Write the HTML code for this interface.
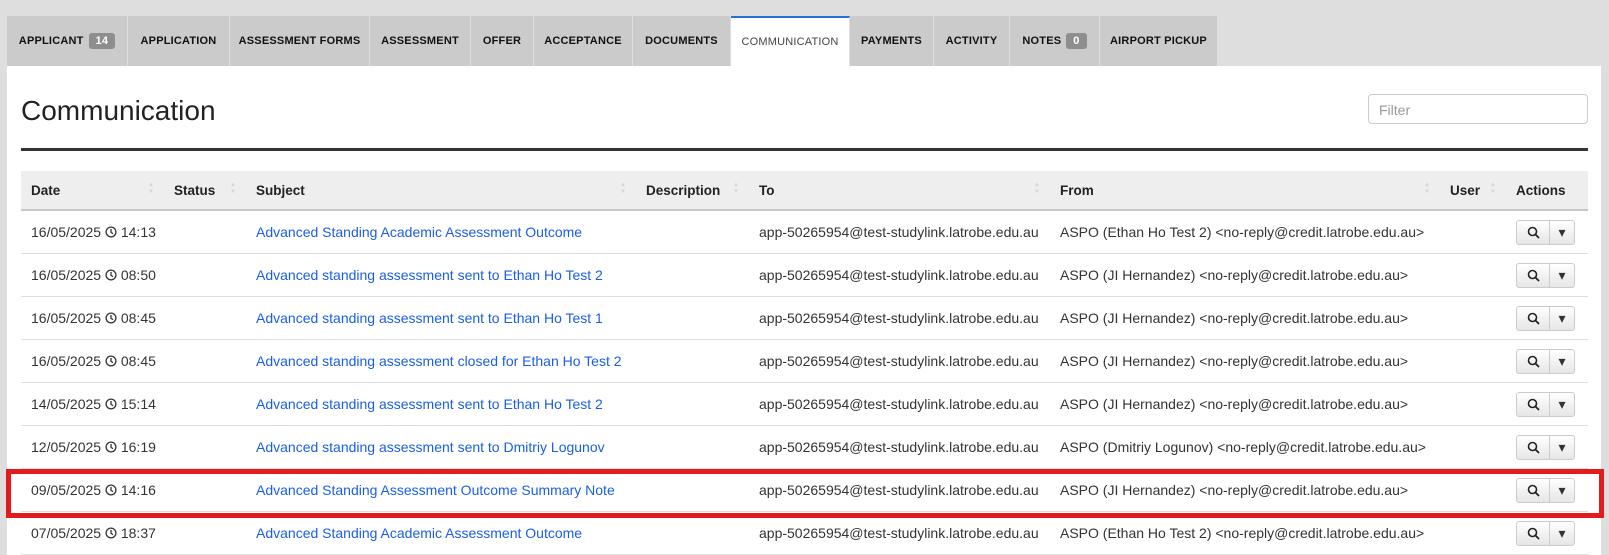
<!DOCTYPE html>
<html><head><meta charset="utf-8"><style>
body{margin:0;width:1609px;height:555px;overflow:hidden;background:#dedede;font-family:"Liberation Sans",Arial,sans-serif;position:relative}
.tabs{position:absolute;left:7px;top:16px;height:50px;display:flex}
.tab{height:50px;box-sizing:border-box;background:#cbcbcb;border-right:1px solid #dedede;font-size:11px;font-weight:bold;color:#111;display:flex;align-items:center;justify-content:center;letter-spacing:.2px}
.tab.act{background:#fff;border-top:2px solid #2a6fdb;color:#444;font-weight:normal}
.badge{background:#8e8e8e;color:#fff;border-radius:3px;padding:2px 7px;margin-left:5px;font-size:11px}
.main{position:absolute;left:7px;top:66px;width:1594px;height:489px;background:#fff}
h1{position:absolute;left:21px;top:95px;margin:0;font-weight:normal;font-size:28px;color:#222}
.filter{position:absolute;left:1368px;top:94px;width:220px;height:30px;box-sizing:border-box;border:1px solid #ccc;border-radius:4px;font-size:14px;color:#999;padding:7px 10px}
.rule{position:absolute;left:21px;top:148px;width:1567px;height:3px;background:#333}
table{position:absolute;left:21px;top:171px;width:1567px;border-collapse:collapse;table-layout:fixed;font-size:14px;color:#333}
th{background:#eee;height:38px;text-align:left;font-size:13.5px;color:#222;padding:0 10px;border-bottom:2px solid #c8c8c8;position:relative}
th.s:after{content:"▲\A▼";white-space:pre;position:absolute;right:10px;top:11px;font-size:6px;line-height:7px;color:#d4d4d4}
td{height:42px;padding:0 10px;border-bottom:1px solid #ddd;white-space:nowrap;overflow:visible}
td a{color:#1a5ee8;text-decoration:none}
.btn{display:inline-flex;width:59px;height:25px;border:1px solid #ccc;border-radius:3px;box-sizing:border-box;background:linear-gradient(#fff,#e6e6e6)}
.btn span{flex:1;display:flex;align-items:center;justify-content:center}
.btn span+span{border-left:1px solid #ccc;flex:0 0 24px}
.red{position:absolute;left:6px;top:469px;width:1598px;height:49px;box-sizing:border-box;border:5px solid #e21c1c}
.ck{display:inline-block;width:12px;height:12px;vertical-align:-1px}
</style></head><body>
<svg width="0" height="0" style="position:absolute"><defs><symbol id="clk" viewBox="0 0 12 12"><circle cx="6" cy="6" r="4.9" fill="none" stroke="#333" stroke-width="1.3"/><path d="M6 3v3.2l2 1.6" fill="none" stroke="#333" stroke-width="1.3"/></symbol></defs></svg>
<div class="tabs">
<div class="tab" style="width:121px">APPLICANT <span class="badge">14</span></div>
<div class="tab" style="width:102px">APPLICATION</div>
<div class="tab" style="width:140px">ASSESSMENT FORMS</div>
<div class="tab" style="width:101px">ASSESSMENT</div>
<div class="tab" style="width:63px">OFFER</div>
<div class="tab" style="width:99px">ACCEPTANCE</div>
<div class="tab" style="width:98px">DOCUMENTS</div>
<div class="tab act" style="width:119px">COMMUNICATION</div>
<div class="tab" style="width:84px">PAYMENTS</div>
<div class="tab" style="width:76px">ACTIVITY</div>
<div class="tab" style="width:90px">NOTES <span class="badge">0</span></div>
<div class="tab" style="width:118px">AIRPORT PICKUP</div>
</div>
<div class="main"></div>
<h1>Communication</h1>
<div class="filter">Filter</div>
<div class="rule"></div>
<table>
<colgroup><col style="width:143px"><col style="width:82px"><col style="width:390px"><col style="width:113px"><col style="width:301px"><col style="width:390px"><col style="width:66px"><col style="width:82px"></colgroup>
<tr><th class="s">Date</th><th class="s">Status</th><th class="s">Subject</th><th class="s">Description</th><th class="s">To</th><th class="s">From</th><th class="s">User</th><th>Actions</th></tr>
<tr><td>16/05/2025 <svg class="ck"><use href="#clk"/></svg> 14:13</td><td></td><td><a>Advanced Standing Academic Assessment Outcome</a></td><td></td><td>app-50265954@test-studylink.latrobe.edu.au</td><td>ASPO (Ethan Ho Test 2) &lt;no-reply@credit.latrobe.edu.au&gt;</td><td></td><td><div class="btn"><span><svg width="13" height="13" viewBox="0 0 13 13"><circle cx="5.5" cy="5.5" r="4" fill="none" stroke="#222" stroke-width="1.6"/><path d="M8.5 8.5L12 12" stroke="#222" stroke-width="1.8"/></svg></span><span>&#9662;</span></div></td></tr>
<tr><td>16/05/2025 <svg class="ck"><use href="#clk"/></svg> 08:50</td><td></td><td><a>Advanced standing assessment sent to Ethan Ho Test 2</a></td><td></td><td>app-50265954@test-studylink.latrobe.edu.au</td><td>ASPO (JI Hernandez) &lt;no-reply@credit.latrobe.edu.au&gt;</td><td></td><td><div class="btn"><span><svg width="13" height="13" viewBox="0 0 13 13"><circle cx="5.5" cy="5.5" r="4" fill="none" stroke="#222" stroke-width="1.6"/><path d="M8.5 8.5L12 12" stroke="#222" stroke-width="1.8"/></svg></span><span>&#9662;</span></div></td></tr>
<tr><td>16/05/2025 <svg class="ck"><use href="#clk"/></svg> 08:45</td><td></td><td><a>Advanced standing assessment sent to Ethan Ho Test 1</a></td><td></td><td>app-50265954@test-studylink.latrobe.edu.au</td><td>ASPO (JI Hernandez) &lt;no-reply@credit.latrobe.edu.au&gt;</td><td></td><td><div class="btn"><span><svg width="13" height="13" viewBox="0 0 13 13"><circle cx="5.5" cy="5.5" r="4" fill="none" stroke="#222" stroke-width="1.6"/><path d="M8.5 8.5L12 12" stroke="#222" stroke-width="1.8"/></svg></span><span>&#9662;</span></div></td></tr>
<tr><td>16/05/2025 <svg class="ck"><use href="#clk"/></svg> 08:45</td><td></td><td><a>Advanced standing assessment closed for Ethan Ho Test 2</a></td><td></td><td>app-50265954@test-studylink.latrobe.edu.au</td><td>ASPO (JI Hernandez) &lt;no-reply@credit.latrobe.edu.au&gt;</td><td></td><td><div class="btn"><span><svg width="13" height="13" viewBox="0 0 13 13"><circle cx="5.5" cy="5.5" r="4" fill="none" stroke="#222" stroke-width="1.6"/><path d="M8.5 8.5L12 12" stroke="#222" stroke-width="1.8"/></svg></span><span>&#9662;</span></div></td></tr>
<tr><td>14/05/2025 <svg class="ck"><use href="#clk"/></svg> 15:14</td><td></td><td><a>Advanced standing assessment sent to Ethan Ho Test 2</a></td><td></td><td>app-50265954@test-studylink.latrobe.edu.au</td><td>ASPO (JI Hernandez) &lt;no-reply@credit.latrobe.edu.au&gt;</td><td></td><td><div class="btn"><span><svg width="13" height="13" viewBox="0 0 13 13"><circle cx="5.5" cy="5.5" r="4" fill="none" stroke="#222" stroke-width="1.6"/><path d="M8.5 8.5L12 12" stroke="#222" stroke-width="1.8"/></svg></span><span>&#9662;</span></div></td></tr>
<tr><td>12/05/2025 <svg class="ck"><use href="#clk"/></svg> 16:19</td><td></td><td><a>Advanced standing assessment sent to Dmitriy Logunov</a></td><td></td><td>app-50265954@test-studylink.latrobe.edu.au</td><td>ASPO (Dmitriy Logunov) &lt;no-reply@credit.latrobe.edu.au&gt;</td><td></td><td><div class="btn"><span><svg width="13" height="13" viewBox="0 0 13 13"><circle cx="5.5" cy="5.5" r="4" fill="none" stroke="#222" stroke-width="1.6"/><path d="M8.5 8.5L12 12" stroke="#222" stroke-width="1.8"/></svg></span><span>&#9662;</span></div></td></tr>
<tr><td>09/05/2025 <svg class="ck"><use href="#clk"/></svg> 14:16</td><td></td><td><a>Advanced Standing Assessment Outcome Summary Note</a></td><td></td><td>app-50265954@test-studylink.latrobe.edu.au</td><td>ASPO (JI Hernandez) &lt;no-reply@credit.latrobe.edu.au&gt;</td><td></td><td><div class="btn"><span><svg width="13" height="13" viewBox="0 0 13 13"><circle cx="5.5" cy="5.5" r="4" fill="none" stroke="#222" stroke-width="1.6"/><path d="M8.5 8.5L12 12" stroke="#222" stroke-width="1.8"/></svg></span><span>&#9662;</span></div></td></tr>
<tr><td>07/05/2025 <svg class="ck"><use href="#clk"/></svg> 18:37</td><td></td><td><a>Advanced Standing Academic Assessment Outcome</a></td><td></td><td>app-50265954@test-studylink.latrobe.edu.au</td><td>ASPO (Ethan Ho Test 2) &lt;no-reply@credit.latrobe.edu.au&gt;</td><td></td><td><div class="btn"><span><svg width="13" height="13" viewBox="0 0 13 13"><circle cx="5.5" cy="5.5" r="4" fill="none" stroke="#222" stroke-width="1.6"/><path d="M8.5 8.5L12 12" stroke="#222" stroke-width="1.8"/></svg></span><span>&#9662;</span></div></td></tr>
</table>
<div class="red"></div>
</body></html>
